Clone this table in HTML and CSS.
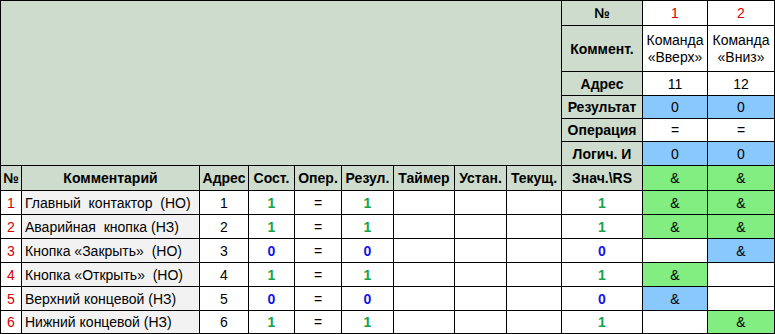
FILE: index.html
```html
<!DOCTYPE html>
<html lang="ru">
<head>
<meta charset="utf-8">
<title>Таблица</title>
<link rel="stylesheet" href="styles.css">
</head>
<body>
<table class="grid">
  <colgroup>
    <col class="c-num"><col class="c-comm"><col class="c-addr"><col class="c-st"><col class="c-op"><col class="c-res"><col class="c-tmr"><col class="c-set"><col class="c-cur"><col class="c-val"><col class="c-k1"><col class="c-k2">
  </colgroup>
  <tbody>
    <tr class="r-25">
      <td class="blank" colspan="9" rowspan="6"></td>
      <th class="lbl">№</th>
      <td class="red">1</td>
      <td class="red">2</td>
    </tr>
    <tr class="r-46">
      <th class="lbl">Коммент.</th>
      <td class="cmd">Команда «Вверх»</td>
      <td class="cmd">Команда «Вниз»</td>
    </tr>
    <tr class="r-24">
      <th class="lbl">Адрес</th>
      <td>11</td>
      <td>12</td>
    </tr>
    <tr class="r-23">
      <th class="lbl">Результат</th>
      <td class="blue">0</td>
      <td class="blue">0</td>
    </tr>
    <tr class="r-23">
      <th class="lbl">Операция</th>
      <td>=</td>
      <td>=</td>
    </tr>
    <tr class="r-24">
      <th class="lbl">Логич. И</th>
      <td class="blue">0</td>
      <td class="blue">0</td>
    </tr>
    <tr class="r-25">
      <th>№</th>
      <th>Комментарий</th>
      <th>Адрес</th>
      <th>Сост.</th>
      <th>Опер.</th>
      <th>Резул.</th>
      <th>Таймер</th>
      <th>Устан.</th>
      <th>Текущ.</th>
      <th>Знач.\RS</th>
      <td class="green">&amp;</td>
      <td class="green">&amp;</td>
    </tr>
    <tr class="r-24">
      <td class="red">1</td>
      <td class="text">Главный&nbsp; контактор&nbsp; (НО)</td>
      <td>1</td>
      <td class="on">1</td>
      <td>=</td>
      <td class="on">1</td>
      <td></td><td></td><td></td>
      <td class="on">1</td>
      <td class="green">&amp;</td>
      <td class="green">&amp;</td>
    </tr>
    <tr class="r-24">
      <td class="red">2</td>
      <td class="text">Аварийная&nbsp; кнопка (НЗ)</td>
      <td>2</td>
      <td class="on">1</td>
      <td>=</td>
      <td class="on">1</td>
      <td></td><td></td><td></td>
      <td class="on">1</td>
      <td class="green">&amp;</td>
      <td class="green">&amp;</td>
    </tr>
    <tr class="r-24">
      <td class="red">3</td>
      <td class="text">Кнопка «Закрыть»&nbsp; (НО)</td>
      <td>3</td>
      <td class="off">0</td>
      <td>=</td>
      <td class="off">0</td>
      <td></td><td></td><td></td>
      <td class="off">0</td>
      <td></td>
      <td class="blue">&amp;</td>
    </tr>
    <tr class="r-24">
      <td class="red">4</td>
      <td class="text">Кнопка «Открыть»&nbsp; (НО)</td>
      <td>4</td>
      <td class="on">1</td>
      <td>=</td>
      <td class="on">1</td>
      <td></td><td></td><td></td>
      <td class="on">1</td>
      <td class="green">&amp;</td>
      <td></td>
    </tr>
    <tr class="r-24">
      <td class="red">5</td>
      <td class="text">Верхний концевой (НЗ)</td>
      <td>5</td>
      <td class="off">0</td>
      <td>=</td>
      <td class="off">0</td>
      <td></td><td></td><td></td>
      <td class="off">0</td>
      <td class="blue">&amp;</td>
      <td></td>
    </tr>
    <tr class="r-23">
      <td class="red">6</td>
      <td class="text">Нижний концевой (НЗ)</td>
      <td>6</td>
      <td class="on">1</td>
      <td>=</td>
      <td class="on">1</td>
      <td></td><td></td><td></td>
      <td class="on">1</td>
      <td></td>
      <td class="green">&amp;</td>
    </tr>
  </tbody>
</table>
</body>
</html>
```

FILE: styles.css
```css
html, body {
  margin: 0;
  padding: 0;
  background: #ffffff;
}

.grid {
  border-collapse: collapse;
  table-layout: fixed;
  width: 775px;
  font-family: "Liberation Sans", Arial, sans-serif;
  font-size: 14px;
  color: #000;
}

.c-num { width: 21px; }
.c-comm { width: 178px; }
.c-addr { width: 49px; }
.c-st { width: 46px; }
.c-op { width: 47px; }
.c-res { width: 52px; }
.c-tmr { width: 61px; }
.c-set { width: 52px; }
.c-cur { width: 55px; }
.c-val { width: 81px; }
.c-k1 { width: 65px; }
.c-k2 { width: 67px; }

.grid td,
.grid th {
  border: 1px solid #000;
  padding: 0;
  text-align: center;
  vertical-align: middle;
  white-space: nowrap;
  overflow: hidden;
  line-height: 16px;
}

.grid th {
  background: #cddccd;
  font-weight: bold;
}

.r-25 { height: 25px; }
.r-24 { height: 24px; }
.r-23 { height: 23px; }
.r-46 { height: 46px; }

.blank {
  background: #cddccd;
}

.lbl {
  background: #cddccd;
}

.red {
  color: #d40000;
}

.cmd {
  white-space: normal !important;
  line-height: 17px !important;
}

.blue {
  background: #88c8fc;
}

.green {
  background: #82ee82;
}

.text {
  background: #f2f2f2;
  text-align: left !important;
  padding-left: 3px !important;
}

.on {
  color: #12a34c;
  font-weight: bold;
}

.off {
  color: #1414e6;
  font-weight: bold;
}
```
